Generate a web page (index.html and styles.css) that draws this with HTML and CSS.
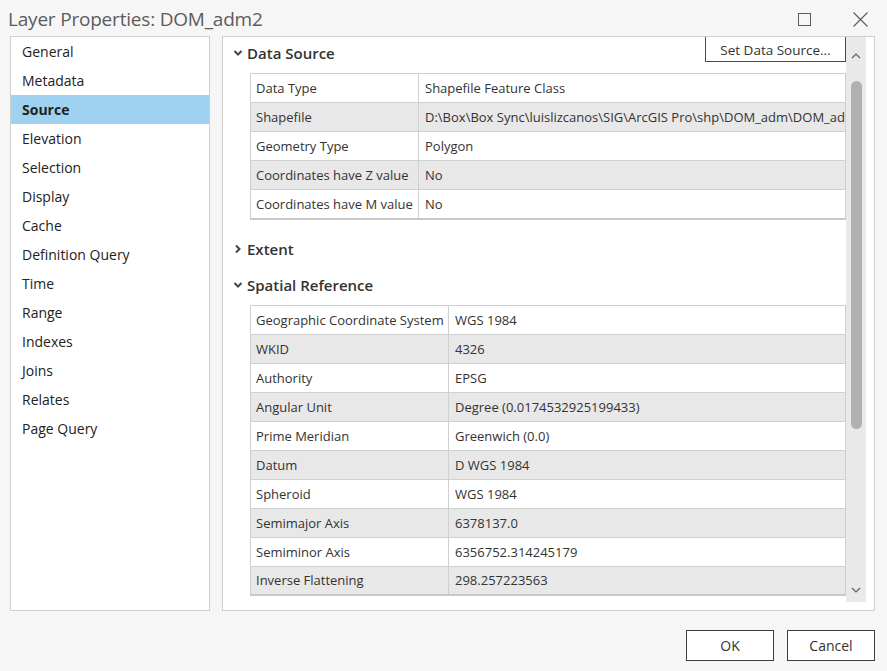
FILE: index.html
```html
<!DOCTYPE html>
<html lang="en">
<head>
<meta charset="utf-8">
<title>Layer Properties: DOM_adm2</title>
<link rel="stylesheet" href="styles.css">
</head>
<body>
<div class="window">
  <header class="titlebar">
    <h1 class="title">Layer Properties: DOM_adm2</h1>
    <div class="win-controls">
      <svg class="wc-max" width="13" height="13" viewBox="0 0 13 13"><rect x="0.5" y="0.5" width="12" height="12" fill="none" stroke="#5a5a5a" stroke-width="1"/></svg>
      <svg class="wc-close" width="15" height="15" viewBox="0 0 15 15"><path d="M0.5 0.5 L14.5 14.5 M14.5 0.5 L0.5 14.5" stroke="#5a5a5a" stroke-width="1.1" fill="none"/></svg>
    </div>
  </header>

  <main class="main">
    <nav class="sidenav">
      <ul class="nav-list">
        <li class="nav-item">General</li>
        <li class="nav-item">Metadata</li>
        <li class="nav-item selected">Source</li>
        <li class="nav-item">Elevation</li>
        <li class="nav-item">Selection</li>
        <li class="nav-item">Display</li>
        <li class="nav-item">Cache</li>
        <li class="nav-item">Definition Query</li>
        <li class="nav-item">Time</li>
        <li class="nav-item">Range</li>
        <li class="nav-item">Indexes</li>
        <li class="nav-item">Joins</li>
        <li class="nav-item">Relates</li>
        <li class="nav-item">Page Query</li>
      </ul>
    </nav>

    <section class="panel">
      <div class="scroll-content">
        <div class="section-head head-first">
          <svg class="chev" width="10" height="10" viewBox="0 0 10 10"><polyline points="1.5,3 5,6.5 8.5,3" fill="none" stroke="#444" stroke-width="2"/></svg>
          <span class="head-text">Data Source</span>
          <button class="btn-source">Set Data Source...</button>
        </div>
        <table class="props props-src">
          <tr><td class="k">Data Type</td><td class="v">Shapefile Feature Class</td></tr>
          <tr><td class="k">Shapefile</td><td class="v">D:\Box\Box Sync\luislizcanos\SIG\ArcGIS Pro\shp\DOM_adm\DOM_adm2.shp</td></tr>
          <tr><td class="k">Geometry Type</td><td class="v">Polygon</td></tr>
          <tr><td class="k">Coordinates have Z value</td><td class="v">No</td></tr>
          <tr><td class="k">Coordinates have M value</td><td class="v">No</td></tr>
        </table>

        <div class="section-head head-extent">
          <svg class="chev" width="10" height="10" viewBox="0 0 10 10"><polyline points="3,1.5 6.5,5 3,8.5" fill="none" stroke="#444" stroke-width="2"/></svg>
          <span class="head-text">Extent</span>
        </div>

        <div class="section-head">
          <svg class="chev" width="10" height="10" viewBox="0 0 10 10"><polyline points="1.5,3 5,6.5 8.5,3" fill="none" stroke="#444" stroke-width="2"/></svg>
          <span class="head-text">Spatial Reference</span>
        </div>
        <table class="props props-sr">
          <tr><td class="k">Geographic Coordinate System</td><td class="v">WGS 1984</td></tr>
          <tr><td class="k">WKID</td><td class="v">4326</td></tr>
          <tr><td class="k">Authority</td><td class="v">EPSG</td></tr>
          <tr><td class="k">Angular Unit</td><td class="v">Degree (0.0174532925199433)</td></tr>
          <tr><td class="k">Prime Meridian</td><td class="v">Greenwich (0.0)</td></tr>
          <tr><td class="k">Datum</td><td class="v">D WGS 1984</td></tr>
          <tr><td class="k">Spheroid</td><td class="v">WGS 1984</td></tr>
          <tr><td class="k">Semimajor Axis</td><td class="v">6378137.0</td></tr>
          <tr><td class="k">Semiminor Axis</td><td class="v">6356752.314245179</td></tr>
          <tr><td class="k">Inverse Flattening</td><td class="v">298.257223563</td></tr>
        </table>
      </div>

      <div class="scrollbar">
        <svg class="sb-arrow" width="10" height="8" viewBox="0 0 10 8"><polyline points="1,6 5,2 9,6" fill="none" stroke="#606060" stroke-width="1.2"/></svg>
        <div class="sb-track"><div class="sb-thumb"></div></div>
        <svg class="sb-arrow" width="10" height="8" viewBox="0 0 10 8"><polyline points="1,2 5,6 9,2" fill="none" stroke="#606060" stroke-width="1.2"/></svg>
      </div>
    </section>
  </main>

  <footer class="footer">
    <button class="btn">OK</button>
    <button class="btn">Cancel</button>
  </footer>
</div>
</body>
</html>
```
FILE: styles.css
```css
* { box-sizing: border-box; }

html, body {
  margin: 0;
  padding: 0;
}

body {
  width: 887px;
  height: 671px;
  background: #f6f6f6;
  font-family: "Open Sans", "Noto Sans", "Liberation Sans", sans-serif;
  color: #222;
  overflow: hidden;
}

.window {
  width: 887px;
  height: 671px;
  display: flex;
  flex-direction: column;
}

/* Title bar */
.titlebar {
  height: 36px;
  display: flex;
  align-items: center;
  justify-content: space-between;
  padding: 0 19px 0 8px;
}

.title {
  margin: 0;
  font-weight: 400;
  font-size: 19px;
  color: #5c5c5c;
  letter-spacing: -0.2px;
  line-height: 36px;
  padding-top: 2px;
}

.win-controls {
  display: flex;
  align-items: center;
  gap: 42px;
  padding-top: 2px;
}

.win-controls svg { display: block; }

/* Main area */
.main {
  display: flex;
  gap: 12px;
  padding: 0 12px 0 10px;
  height: 575px;
}

.sidenav {
  width: 200px;
  background: #fff;
  border: 1px solid #cfcfcf;
}

.nav-list {
  list-style: none;
  margin: 0;
  padding: 0;
}

.nav-item {
  height: 29px;
  line-height: 29px;
  padding-left: 11px;
  font-size: 14px;
  color: #222;
}

.nav-item.selected {
  background: #9fd2f1;
  font-weight: 700;
}

/* Right panel */
.panel {
  flex: 1;
  background: #fff;
  border: 1px solid #cfcfcf;
  display: flex;
  padding-right: 7px;
}

.scroll-content {
  width: 623px;
  overflow: hidden;
}

.section-head {
  display: flex;
  align-items: center;
  height: 36px;
  padding-left: 10px;
  color: #333;
}

.head-first {
  height: 32px;
  align-items: center;
}

.head-extent { margin-top: 11px; }

.chev {
  display: block;
  margin-right: 4px;
}

.head-text {
  font-size: 15px;
  font-weight: 600;
  color: #333;
}

.btn-source {
  margin-left: auto;
  align-self: flex-start;
  width: 141px;
  height: 26px;
  margin-top: -1px;
  background: #fff;
  border: 1px solid #4a4a4a;
  border-top: none;
  font-family: inherit;
  font-size: 13.5px;
  color: #333;
  line-height: 1;
  padding: 0 0 4px;
  display: flex;
  align-items: flex-end;
  justify-content: center;
}

/* Property tables */
.props {
  margin-left: 27px;
  width: 596px;
  border-collapse: collapse;
  table-layout: fixed;
  font-size: 13px;
  color: #333;
  border: 1px solid #cfcfcf;
  border-bottom: 2px solid #c8c8c8;
}

.props-src { margin-top: 4px; }
.props-sr { margin-top: 2px; }

.props td {
  height: 29px;
  border-bottom: 1px solid #d0d0d0;
  padding: 0 5px;
  white-space: nowrap;
  overflow: hidden;
  text-overflow: clip;
  vertical-align: middle;
}

.props td.k {
  border-right: 1px solid #d0d0d0;
}

.props td.v { padding-left: 6px; }

.props tr:nth-child(even) td { background: #e8e8e8; }

.props-src td.k { width: 168px; }
.props-sr td.k { width: 198px; }

/* Scrollbar */
.scrollbar {
  width: 20px;
  margin-bottom: 8px;
  background: #e9e9e9;
  display: flex;
  flex-direction: column;
  align-items: center;
}

.sb-arrow {
  display: block;
  margin: 15px 0 21px;
}

.scrollbar .sb-arrow:last-child {
  margin: 10px 0 8px;
}

.sb-track {
  flex: 1;
  width: 100%;
  display: flex;
  justify-content: center;
  padding-left: 1px;
}

.sb-thumb {
  width: 11px;
  height: 348px;
  border-radius: 6px;
  background: #b0b0b0;
}

/* Footer */
.footer {
  flex: 1;
  display: flex;
  justify-content: flex-end;
  gap: 13px;
  padding: 19px 12px 0 0;
}

.btn {
  width: 88px;
  height: 31px;
  background: #fff;
  border: 1px solid #3d3d3d;
  font-family: inherit;
  font-size: 14px;
  color: #333;
  padding: 0;
}
```
